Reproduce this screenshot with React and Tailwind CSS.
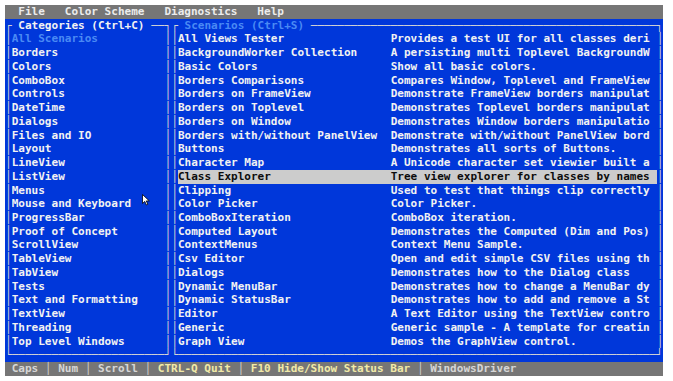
import React from 'react';

// UICatalog terminal screen: 99 columns x 27 rows, cell 6.65 x 13.74
const categories = [
  'All Scenarios',
  'Borders',
  'Colors',
  'ComboBox',
  'Controls',
  'DateTime',
  'Dialogs',
  'Files and IO',
  'Layout',
  'LineView',
  'ListView',
  'Menus',
  'Mouse and Keyboard',
  'ProgressBar',
  'Proof of Concept',
  'ScrollView',
  'TableView',
  'TabView',
  'Tests',
  'Text and Formatting',
  'TextView',
  'Threading',
  'Top Level Windows',
];

const scenarios = [
  ['All Views Tester', 'Provides a test UI for all classes deri'],
  ['BackgroundWorker Collection', 'A persisting multi Toplevel BackgroundW'],
  ['Basic Colors', 'Show all basic colors.'],
  ['Borders Comparisons', 'Compares Window, Toplevel and FrameView'],
  ['Borders on FrameView', 'Demonstrate FrameView borders manipulat'],
  ['Borders on Toplevel', 'Demonstrates Toplevel borders manipulat'],
  ['Borders on Window', 'Demonstrates Window borders manipulatio'],
  ['Borders with/without PanelView', 'Demonstrate with/without PanelView bord'],
  ['Buttons', 'Demonstrates all sorts of Buttons.'],
  ['Character Map', 'A Unicode character set viewier built a'],
  ['Class Explorer', 'Tree view explorer for classes by names'],
  ['Clipping', 'Used to test that things clip correctly'],
  ['Color Picker', 'Color Picker.'],
  ['ComboBoxIteration', 'ComboBox iteration.'],
  ['Computed Layout', 'Demonstrates the Computed (Dim and Pos)'],
  ['ContextMenus', 'Context Menu Sample.'],
  ['Csv Editor', 'Open and edit simple CSV files using th'],
  ['Dialogs', 'Demonstrates how to the Dialog class'],
  ['Dynamic MenuBar', 'Demonstrates how to change a MenuBar dy'],
  ['Dynamic StatusBar', 'Demonstrates how to add and remove a St'],
  ['Editor', 'A Text Editor using the TextView contro'],
  ['Generic', 'Generic sample - A template for creatin'],
  ['Graph View', 'Demos the GraphView control.'],
];

const row = 'flex h-[13.74px] leading-[13.74px] whitespace-pre';
const line = 'text-[#d4d4d4] font-normal';

// 边框面板
const Frame = ({ title, titleClass, dashes, width, children }) => (
  <div className={`flex flex-col ${width}`}>
    <div className={row}>
      <span className={line}>┌ </span>
      <span className={titleClass}>{title}</span>
      <span className={line}>{' ' + '─'.repeat(dashes) + '┐'}</span>
    </div>
    {children}
    <div className={row}>
      <span className={line}>{'└' + '─'.repeat(dashes + title.length + 2) + '┘'}</span>
    </div>
  </div>
);

const Line = ({ children }) => (
  <div className={row}>
    <span className={`${line} w-[6.65px]`}>│</span>
    <div className="flex-1 flex overflow-hidden">{children}</div>
    <span className={`${line} w-[6.65px]`}>│</span>
  </div>
);

const Sep = () => <span className="text-[#cfcfcf] font-normal"> │ </span>;

const App = () => {
  return (
    <div className="relative w-[673px] h-[381px] bg-white pt-[5px] pl-[5px] overflow-hidden font-['DejaVu_Sans_Mono',monospace] font-bold text-[11.046px] text-[#f2f2f2]">
      <div className="w-[658.35px]">
        {/* 菜单栏 */}
        <div className={`${row} bg-[#767676] text-[#ececec]`}>
          {'  File   Color Scheme   Diagnostics   Help'}
        </div>

        {/* 主体 */}
        <div className="flex bg-[#0037da]">
          <Frame title="Categories (Ctrl+C)" titleClass="text-[#f2f2f2]" dashes={2} width="w-[166.25px]">
            {categories.map((c, i) => (
              <Line key={c}>
                <span className={i === 0 ? 'text-[#4a8af4]' : ''}>{c}</span>
              </Line>
            ))}
          </Frame>
          <Frame title="Scenarios (Ctrl+S)" titleClass="text-[#4a8af4]" dashes={52} width="w-[492.1px]">
            {scenarios.map(([name, desc]) => {
              const selected = name === 'Class Explorer';
              return (
                <Line key={name}>
                  <div className={`flex-1 flex ${selected ? 'bg-[#cccccc] text-[#0c0c0c]' : ''}`}>
                    <span className="w-[212.8px] shrink-0">{name}</span>
                    <span>{desc}</span>
                  </div>
                </Line>
              );
            })}
          </Frame>
        </div>

        {/* 状态栏 */}
        <div className={`${row} bg-[#767676] text-[#d6d6d6]`}>
          <span> Caps</span>
          <Sep />
          <span>Num</span>
          <Sep />
          <span>Scroll</span>
          <Sep />
          <span className="text-[#f1eaa8]">CTRL-Q Quit</span>
          <Sep />
          <span className="text-[#f1eaa8]">F10 Hide/Show Status Bar</span>
          <Sep />
          <span>WindowsDriver</span>
        </div>
      </div>

      {/* 鼠标指针 */}
      <svg className="absolute left-[142px] top-[194px]" width="8" height="12" viewBox="0 0 8 12">
        <path d="M0.5 0.5 L0.5 9.5 L2.8 7.4 L4.4 11 L5.8 10.3 L4.3 6.9 L7.3 6.9 Z" fill="#ffffff" stroke="#000000" strokeWidth="0.8" />
      </svg>
    </div>
  );
};

export default App;
